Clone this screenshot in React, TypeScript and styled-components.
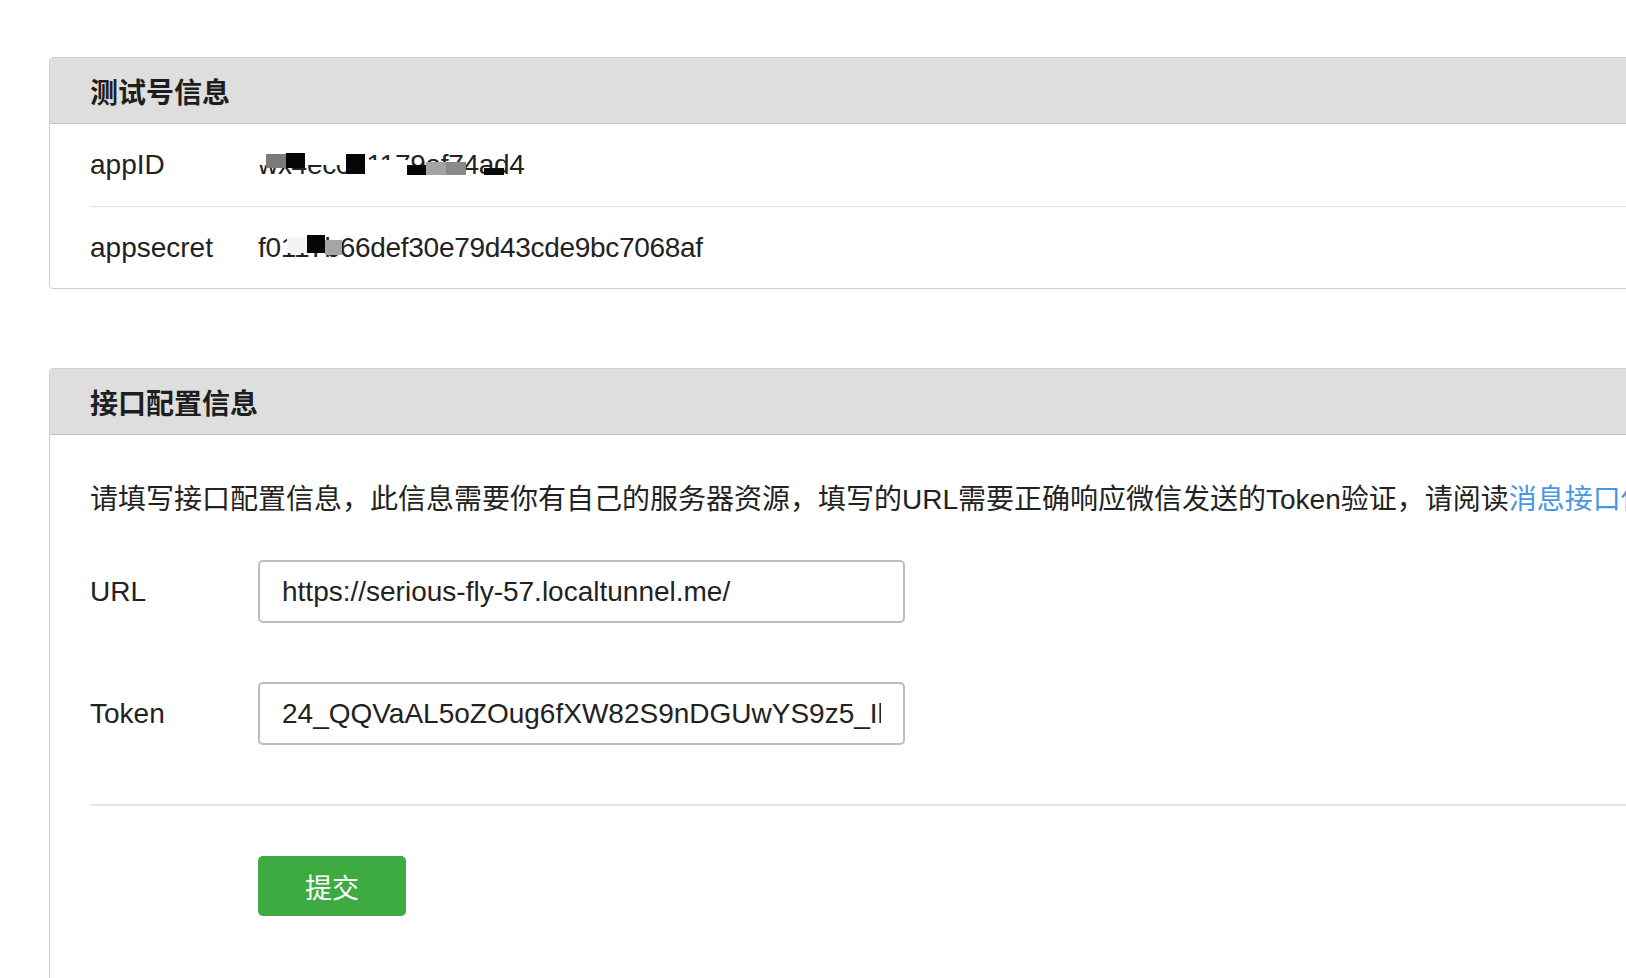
import styled, { createGlobalStyle } from 'styled-components';

const GlobalStyle = createGlobalStyle`
  html, body {
    margin: 0;
    padding: 0;
    background: #ffffff;
    overflow: hidden;
  }
  body {
    font-family: "Liberation Sans", "Noto Sans CJK SC", sans-serif;
    color: #222222;
  }
`;

const Page = styled.div`
  display: flex;
  flex-direction: column;
  gap: 79px;
  padding: 57px 0 0 49px;
`;

const Panel = styled.section`
  width: 1700px;
  border: 1px solid #cfcfcf;
  border-radius: 4px 0 0 4px;
  background: #ffffff;
  overflow: hidden;
`;

const PanelHeader = styled.header`
  display: flex;
  align-items: center;
  height: 65px;
  padding-left: 40px;
  background: #dedede;
  border-bottom: 1px solid #c6c6c6;
`;

const PanelTitle = styled.h2`
  margin: 0;
  font-family: "Noto Sans CJK SC", sans-serif;
  font-size: 28px;
  font-weight: 700;
  color: #1e1e1e;
`;

const InfoRow = styled.div<{ $last?: boolean }>`
  display: flex;
  align-items: center;
  height: ${(p) => (p.$last ? 81 : 82)}px;
  margin-left: 40px;
  border-bottom: ${(p) => (p.$last ? 'none' : '1px solid #e3e3e3')};
  font-size: 28px;
`;

const Label = styled.div`
  width: 168px;
  flex-shrink: 0;
  font-size: 28px;
`;

const Masked = styled.span`
  position: relative;
  display: inline-block;
  height: 32px;
  line-height: 32px;
  letter-spacing: -0.3px;
  white-space: nowrap;
`;

const Blot = styled.span<{ $x: number; $y: number; $w: number; $h: number; $c: string }>`
  position: absolute;
  left: ${(p) => p.$x}px;
  top: ${(p) => p.$y}px;
  width: ${(p) => p.$w}px;
  height: ${(p) => p.$h}px;
  background: ${(p) => p.$c};
`;

const PanelBody = styled.div`
  padding: 45px 40px 120px;
`;

const Description = styled.p`
  margin: 0;
  font-size: 28px;
  line-height: 40px;
  white-space: nowrap;
`;

const Link = styled.a`
  color: #4a95e4;
  text-decoration: none;
`;

const FormRow = styled.div<{ $gap: number }>`
  display: flex;
  align-items: center;
  margin-top: ${(p) => p.$gap}px;
`;

const TextInput = styled.input`
  box-sizing: border-box;
  width: 647px;
  height: 63px;
  padding: 0 22px;
  border: 2px solid #bdbdbd;
  border-radius: 5px;
  font-family: "Liberation Sans", sans-serif;
  font-size: 28px;
  color: #222222;
  background: #ffffff;
  outline: none;
`;

const Divider = styled.hr`
  margin: 59px 0 0;
  border: none;
  border-top: 2px solid #e4e4e4;
`;

const Actions = styled.div`
  margin-top: 50px;
  padding-left: 168px;
`;

const SubmitButton = styled.button`
  width: 148px;
  height: 60px;
  border: none;
  border-radius: 5px;
  background: #3dab42;
  color: #ffffff;
  font-family: "Noto Sans CJK SC", sans-serif;
  font-size: 27px;
  cursor: pointer;
`;

type BlotData = { x: number; y: number; w: number; h: number; c: string };

// mosaic over the masked credentials
const appIdBlots: BlotData[] = [
  { x: 0, y: 0, w: 88, h: 16, c: '#ffffff' },
  { x: 107, y: 11, w: 42, h: 21, c: '#ffffff' },
  { x: 8, y: 5, w: 20, h: 14, c: '#7a7a7a' },
  { x: 28, y: 4, w: 19, h: 15, c: '#050505' },
  { x: 88, y: 5, w: 19, h: 20, c: '#050505' },
  { x: 149, y: 16, w: 19, h: 10, c: '#050505' },
  { x: 168, y: 13, w: 20, h: 13, c: '#a3a3a3' },
  { x: 188, y: 13, w: 20, h: 13, c: '#8a8a8a' },
  { x: 226, y: 19, w: 20, h: 7, c: '#0a0a0a' },
];

const secretBlots: BlotData[] = [
  { x: 29, y: 5, w: 20, h: 16, c: '#f4f4f4' },
  { x: 49, y: 3, w: 18, h: 18, c: '#050505' },
  { x: 67, y: 8, w: 17, h: 15, c: '#a5a5a5' },
];

function MaskedValue({ text, blots }: { text: string; blots: BlotData[] }) {
  return (
    <Masked>
      {text}
      {blots.map((b, i) => (
        <Blot key={i} $x={b.x} $y={b.y} $w={b.w} $h={b.h} $c={b.c} />
      ))}
    </Masked>
  );
}

export default function App() {
  return (
    <>
      <GlobalStyle />
      <Page>
        <Panel>
          <PanelHeader>
            <PanelTitle>测试号信息</PanelTitle>
          </PanelHeader>
          <InfoRow>
            <Label>appID</Label>
            <MaskedValue text="wx4ec0a1179af74ad4" blots={appIdBlots} />
          </InfoRow>
          <InfoRow $last>
            <Label>appsecret</Label>
            <MaskedValue text="f0117b66def30e79d43cde9bc7068af" blots={secretBlots} />
          </InfoRow>
        </Panel>

        <Panel>
          <PanelHeader>
            <PanelTitle>接口配置信息</PanelTitle>
          </PanelHeader>
          <PanelBody>
            <Description>
              请填写接口配置信息，此信息需要你有自己的服务器资源，填写的URL需要正确响应微信发送的Token验证，请阅读
              <Link href="#">消息接口使用指南</Link>。
            </Description>
            <FormRow $gap={40}>
              <Label>URL</Label>
              <TextInput defaultValue="https://serious-fly-57.localtunnel.me/" />
            </FormRow>
            <FormRow $gap={59}>
              <Label>Token</Label>
              <TextInput defaultValue="24_QQVaAL5oZOug6fXW82S9nDGUwYS9z5_IlK3mPq8rT" />
            </FormRow>
            <Divider />
            <Actions>
              <SubmitButton type="button">提交</SubmitButton>
            </Actions>
          </PanelBody>
        </Panel>
      </Page>
    </>
  );
}
